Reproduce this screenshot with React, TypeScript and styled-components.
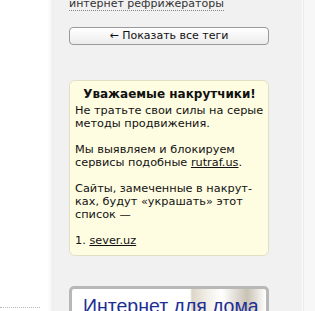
import React from 'react';
import styled, { createGlobalStyle } from 'styled-components';

const GlobalStyle = createGlobalStyle`
  html, body {
    margin: 0;
    padding: 0;
    background: #f9f9f9;
    overflow: hidden;
  }
  body {
    font-family: "DejaVu Sans", Verdana, sans-serif;
  }
`;

const Page = styled.div`
  display: flex;
  width: 315px;
  height: 311px;
  overflow: hidden;
`;

const LeftColumn = styled.div`
  width: 54px;
  flex-shrink: 0;
  background: linear-gradient(to right, #ffffff 0, #ffffff 48px, #ececec 54px);
  display: flex;
  flex-direction: column;
  justify-content: flex-end;
  padding-bottom: 3px;
  box-sizing: border-box;
`;

const DottedRule = styled.div`
  width: 40px;
  border-bottom: 1px dotted #b8b8b8;
`;

const Sidebar = styled.div`
  width: 249px;
  flex-shrink: 0;
  background: #f1f1f1;
  border-right: 1px solid #fbfbfb;
  padding: 0 0 0 15px;
  box-sizing: border-box;
  display: flex;
  flex-direction: column;
`;

const RightColumn = styled.div`
  flex: 1;
  background: #f7f7f7;
  border-left: 1px solid #eaeaea;
`;

const TagLink = styled.a`
  display: inline-block;
  margin-top: -3px;
  font-size: 11px;
  line-height: 13px;
  color: #333;
  text-decoration: none;
  border-bottom: 1px dotted #888;
  align-self: flex-start;
`;

const ShowAllButton = styled.button`
  margin-top: 16px;
  width: 200px;
  height: 18px;
  padding: 0;
  border: 1px solid #9a9a9a;
  border-radius: 4px;
  background: linear-gradient(#ffffff, #ececec);
  font-family: "DejaVu Sans", Verdana, sans-serif;
  font-size: 11px;
  line-height: 16px;
  color: #111;
  text-align: center;
`;

const Notice = styled.div`
  margin-top: 35px;
  width: 200px;
  box-sizing: border-box;
  background: #fffde1;
  border: 1px solid #e2dfc6;
  border-radius: 6px;
  padding: 6px 4px 8px 5px;
  font-size: 11.3px;
  line-height: 13.2px;
  color: #111;
`;

const NoticeTitle = styled.div`
  font-size: 12px;
  font-weight: bold;
  text-align: center;
  line-height: 14px;
  margin-bottom: 3px;
`;

const Para = styled.p`
  margin: 0 0 12.5px 0;
  &:last-child {
    margin-bottom: 0;
  }
`;

const Underlined = styled.a`
  color: #111;
  text-decoration: underline;
`;

const AdBox = styled.div`
  margin-top: 30px;
  width: 200px;
  height: 60px;
  box-sizing: border-box;
  border: 3px solid #b8b8b8;
  border-radius: 5px;
  background: linear-gradient(to right, #ffffff 0, #ffffff 118px, #dcd6c8 120px, #f2efe8 135px, #ffffff 150px, #c9c2b4 175px, #ffffff 194px);
  padding: 6px 0 0 11px;
`;

const AdTitle = styled.div`
  font-family: "Liberation Sans", Arial, sans-serif;
  font-size: 19.5px;
  line-height: 22px;
  color: #1d2f94;
  white-space: nowrap;
`;

export default function App() {
  return (
    <>
      <GlobalStyle />
      <Page>
        <LeftColumn>
          <DottedRule />
        </LeftColumn>
        <Sidebar>
          <TagLink href="#">интернет рефрижераторы</TagLink>
          <ShowAllButton>← Показать все теги</ShowAllButton>
          <Notice>
            <NoticeTitle>Уважаемые накрутчики!</NoticeTitle>
            <Para>Не тратьте свои силы на серые методы продвижения.</Para>
            <Para>
              Мы выявляем и блокируем сервисы подобные <Underlined href="#">rutraf.us</Underlined>.
            </Para>
            <Para>Сайты, замеченные в накрут-ках, будут «украшать» этот список —</Para>
            <Para>
              1. <Underlined href="#">sever.uz</Underlined>
            </Para>
          </Notice>
          <AdBox>
            <AdTitle>Интернет для дома</AdTitle>
          </AdBox>
        </Sidebar>
        <RightColumn />
      </Page>
    </>
  );
}
